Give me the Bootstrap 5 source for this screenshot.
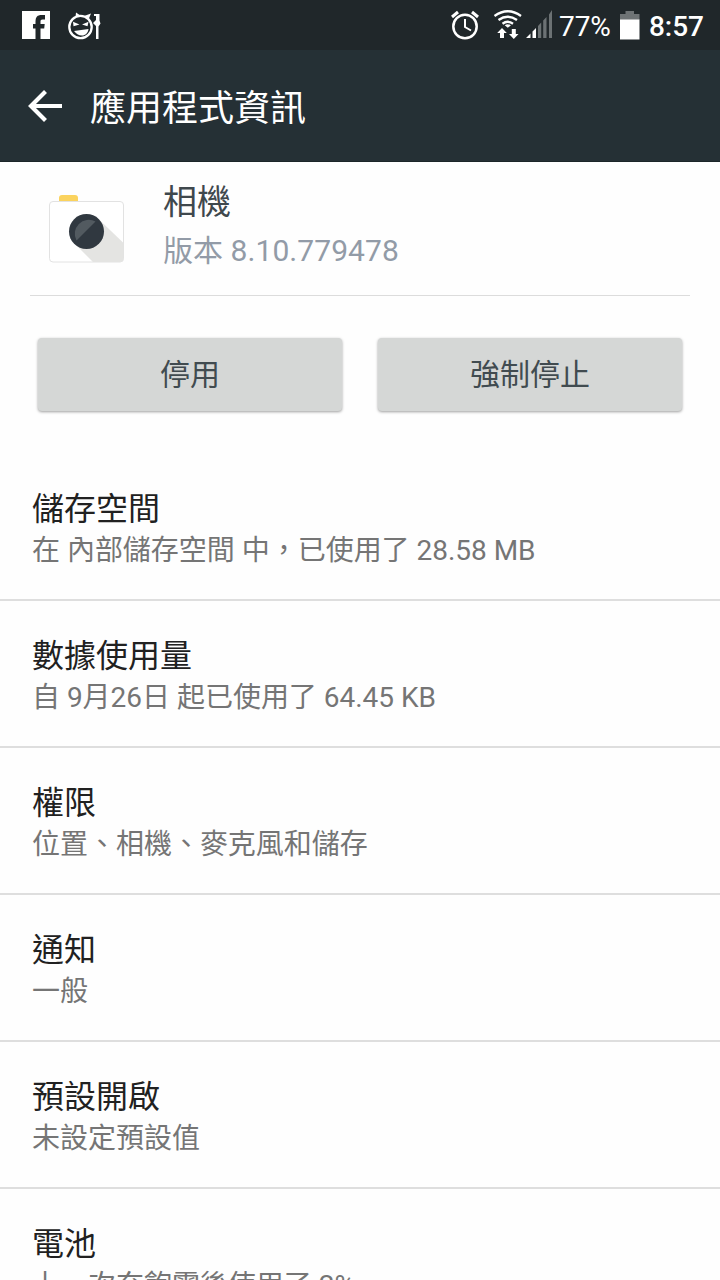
<!DOCTYPE html>
<html lang="zh-Hant">
<head>
<meta charset="utf-8">
<meta name="viewport" content="width=device-width, initial-scale=1">
<title>應用程式資訊</title>
<link href="https://cdn.jsdelivr.net/npm/bootstrap@5.3.0/dist/css/bootstrap.min.css" rel="stylesheet">
<style>
body{font-family:Roboto,"Noto Sans CJK TC",sans-serif;background:#fefefe;height:1280px;overflow:hidden}
svg{display:block;flex:none}
.status-bar{height:50px;background:#20272a;color:#fff;font-size:28px;line-height:50px}
.status-bar span{padding-top:4px}
.app-bar{height:112px;background:#253035;color:#fff;border-bottom:1px solid #1c2629}
.app-bar h1{font-size:36px;line-height:50px;font-weight:400;margin:0 0 0 28px;padding-top:7px}
.app-head{height:134px;margin:0 30px;border-bottom:1px solid #dcdcdc}
.app-name{font-size:34px;line-height:48px;color:#3f484d}
.app-version{font-size:30px;line-height:50px;letter-spacing:.06px;color:#929ba7}
.action-row{padding:42px 38px 0;gap:36px;height:158px}
.action-row .btn{height:73px;background:#d5d7d6;color:#414b50;font-size:30px;line-height:44px;border:0;border-radius:4px;box-shadow:0 1px 3px rgba(0,0,0,.38)}
.list-group-flush > .setting{height:147px;padding:35px 32px 0;border:0;border-bottom:2px solid #dedede;background:transparent;border-radius:0;position:static}
.setting h2{font-size:32px;line-height:40px;font-weight:400;color:#212121;margin:0}
.setting p{font-size:28px;line-height:43px;color:#757575;margin:0;white-space:nowrap;letter-spacing:-.02px}
</style>
</head>
<body>
<header>
  <div class="status-bar d-flex align-items-center">
    <svg width="120" height="50" viewBox="0 0 120 50">
      <rect x="22" y="11" width="28" height="28" fill="#fff"/>
      <path d="M35.500 39V28.500H33V24h2.500v-2.500c0-4.500 2-6.500 6-6.500H45v4.500h-2.500c-1.500 0-2 .7-2 2V24h4.200l-.5 4.500h-3.700V39z" fill="#20272a"/>
      <circle cx="80.500" cy="27" r="11.200" fill="none" stroke="#fff" stroke-width="2.300"/>
      <path d="M76 12.500l-.5 5 5.500-1.500zM84 16l7-2.500-2.500 6z" fill="#fff"/>
      <path d="M73 21.800l6.500 2.700-6 1.800zM88.500 21.800l-6.500 2.700 5.500 1.800zM74 31l14.500-2c-.5 4-3 6.500-6.500 6.500-3.500 0-6-2-8-4.500z" fill="#fff"/>
      <path d="M94 14h5.500v6.500l1 3-2 3V39H96V26l-3-3 3-3v-4h-2z" fill="#fff"/>
    </svg>
    <svg class="ms-auto" width="120" height="50" viewBox="439 0 120 50">
      <g fill="none" stroke="#fff">
        <circle cx="465" cy="26.500" r="11.700" stroke-width="2.500"/>
        <path d="M465 19v8l6 3.500" stroke-width="2"/>
        <path d="M452 17l6-5M478 17l-6-5" stroke-width="3"/>
        <path d="M494.500 16q13.200-9.500 26.500 0M498.500 20q9.200-6.500 18.500 0M502.500 23.700q5.200-3.800 10.500 0" stroke-width="2.300"/>
      </g>
      <path d="M504.700 25.200q3-2 6.200 0l-3.100 2.600zM502 28l4.800 5h-2.800v5h-4v-5h-2.800zM511.800 29h4v5h2.700l-4.700 5-4.800-5h2.800z" fill="#fff"/>
      <path d="M526 38l4.500-4.500V38zM532.500 31.500l3.500-3.500v10h-3.500z" fill="#fff"/>
      <path d="M538 26l3.200-3.500V38H538zM543.200 20.500l3.300-3.500v21h-3.300zM549 14.500l3-4.500v28h-3z" fill="#6c7274"/>
    </svg>
    <span id="pct">77%</span>
    <svg style="margin-left:8px" width="22" height="50" viewBox="618 0 22 50">
      <path d="M619 14h5.500v-3h8.500v3h5.500v6H619z" fill="#6e7375"/><path d="M619 19.500h19.500v20H619z" fill="#fff"/>
    </svg>
    <span id="clock" class="fw-medium" style="margin:0 16px 0 8px">8:57</span>
  </div>
  <nav class="app-bar d-flex align-items-center" aria-label="工具列">
    <svg style="margin-left:28px" width="34" height="36" viewBox="0 0 34 36"><path d="M17.500 3.500L3 18 17.500 32.500M3.500 18H34" fill="none" stroke="#fff" stroke-width="4.200"/></svg>
    <h1>應用程式資訊</h1>
  </nav>
</header>
<main>
  <section class="app-head d-flex">
    <svg width="133" height="133" viewBox="30 162 133 133">
      <path d="M59 204v-6q0-3 3-3h13q3 0 3 3v6z" fill="#fbd35e"/>
      <rect x="49.500" y="201.500" width="74" height="60.500" rx="3.500" fill="#fff" stroke="#e2e2e2"/>
      <path d="M98.500 219l25 24v15.500q0 3.500-3.500 3.500H93L75 244z" fill="#e4e4e2"/>
      <circle cx="86.500" cy="231.500" r="17.500" fill="#303840"/>
      <path d="M76.500 240.500a14 14 0 0 1 19-19z" fill="#525a60"/>
    </svg>
    <div class="pt-3"><div class="app-name">相機</div><div class="app-version">版本 8.10.779478</div></div>
  </section>
  <div class="action-row d-flex">
    <button type="button" class="btn flex-fill w-50">停用</button>
    <button type="button" class="btn flex-fill w-50">強制停止</button>
  </div>
  <div class="list-group list-group-flush">
    <div class="list-group-item setting"><h2>儲存空間</h2><p>在 內部儲存空間 中，已使用了 28.58 MB</p></div>
    <div class="list-group-item setting"><h2>數據使用量</h2><p>自 9月26日 起已使用了 64.45 KB</p></div>
    <div class="list-group-item setting"><h2>權限</h2><p>位置、相機、麥克風和儲存</p></div>
    <div class="list-group-item setting"><h2>通知</h2><p>一般</p></div>
    <div class="list-group-item setting"><h2>預設開啟</h2><p>未設定預設值</p></div>
    <div class="list-group-item setting"><h2>電池</h2><p>上一次充飽電後使用了 2%</p></div>
  </div>
</main>
<script src="https://cdn.jsdelivr.net/npm/bootstrap@5.3.0/dist/js/bootstrap.bundle.min.js"></script>
</body>
</html>
